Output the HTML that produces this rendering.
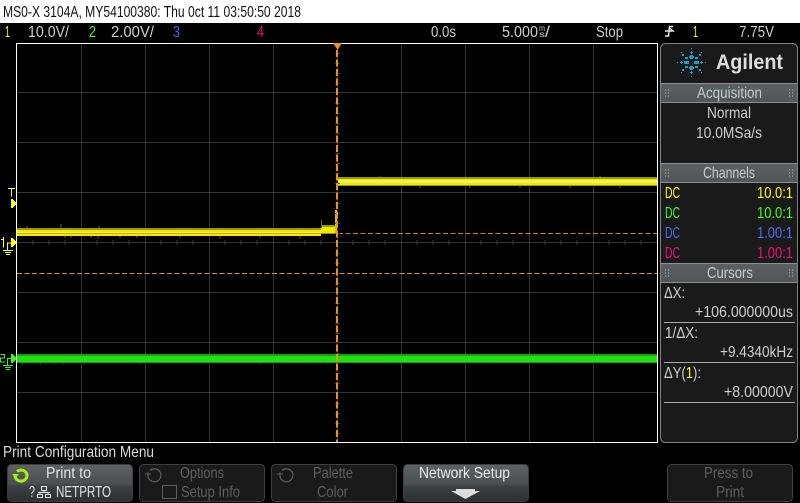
<!DOCTYPE html>
<html><head><meta charset="utf-8"><style>
html,body{margin:0;padding:0;background:#000;width:800px;height:503px;overflow:hidden}
svg{display:block}
text{font-family:"Liberation Sans",sans-serif;font-size:16px;fill:#cfcfcf}
.c{shape-rendering:crispEdges}
.h{fill:#c8cccc}
.d{fill:#5f5f5f;font-size:16px}
.w{fill:#e2e2e2}
</style></head><body>
<svg width="800" height="503" viewBox="0 0 800 503" xmlns="http://www.w3.org/2000/svg">
<defs>
<linearGradient id="hg" x1="0" y1="0" x2="0" y2="1"><stop offset="0" stop-color="#5c6163"/><stop offset="1" stop-color="#505456"/></linearGradient>
<linearGradient id="bg" x1="0" y1="0" x2="0" y2="1"><stop offset="0" stop-color="#5e6264"/><stop offset=".5" stop-color="#4c5052"/><stop offset=".6" stop-color="#3c4042"/><stop offset="1" stop-color="#2c3032"/></linearGradient>
</defs>
<rect width="800" height="503" fill="#000"/>
<rect width="800" height="23" fill="#fff"/>
<text x="3" y="17" textLength="298" lengthAdjust="spacingAndGlyphs" style="fill:#111">MS0-X 3104A, MY54100380: Thu 0ct 11 03:50:50 2018</text>

<!-- status row -->
<text x="5" y="37" textLength="5" lengthAdjust="spacingAndGlyphs" style="fill:#ffff20">1</text>
<text x="28" y="37" textLength="41" lengthAdjust="spacingAndGlyphs">10.0V/</text>
<text x="89" y="37" textLength="7" lengthAdjust="spacingAndGlyphs" style="fill:#40ff20">2</text>
<text x="111" y="37" textLength="43" lengthAdjust="spacingAndGlyphs">2.00V/</text>
<text x="173" y="37" textLength="7" lengthAdjust="spacingAndGlyphs" style="fill:#4868e8">3</text>
<text x="257" y="37" textLength="7" lengthAdjust="spacingAndGlyphs" style="fill:#e8106c">4</text>
<text x="431" y="37" textLength="25" lengthAdjust="spacingAndGlyphs">0.0s</text>
<text x="502" y="37" textLength="36" lengthAdjust="spacingAndGlyphs">5.000</text>
<text x="539" y="31" textLength="6" lengthAdjust="spacingAndGlyphs" style="font-size:8px">m</text>
<text x="539" y="37" textLength="6" lengthAdjust="spacingAndGlyphs" style="font-size:8px">s</text>
<text x="545" y="37" textLength="5" lengthAdjust="spacingAndGlyphs">/</text>
<text x="596" y="37" textLength="27" lengthAdjust="spacingAndGlyphs">Stop</text>
<path d="M665 36h3.500l1-9.500h3.500M665 31h8l-4-3.500" stroke="#e8e8e8" stroke-width="1.400" fill="none"/>
<text x="693" y="37" textLength="5" lengthAdjust="spacingAndGlyphs" style="fill:#ffff20">1</text>
<text x="739" y="37" textLength="35" lengthAdjust="spacingAndGlyphs">7.75V</text>

<!-- graticule -->
<g class="c" fill="#343434">
<rect x="81" y="44" width="1" height="398"/><rect x="145" y="44" width="1" height="398"/><rect x="209" y="44" width="1" height="398"/><rect x="273" y="44" width="1" height="398"/><rect x="337" y="44" width="1" height="398"/><rect x="401" y="44" width="1" height="398"/><rect x="465" y="44" width="1" height="398"/><rect x="529" y="44" width="1" height="398"/><rect x="593" y="44" width="1" height="398"/>
<rect x="17" y="92" width="641" height="1"/><rect x="17" y="142" width="641" height="1"/><rect x="17" y="192" width="641" height="1"/><rect x="17" y="242" width="641" height="1"/><rect x="17" y="292" width="641" height="1"/><rect x="17" y="342" width="641" height="1"/><rect x="17" y="392" width="641" height="1"/>
</g>
<path class="c" d="M33 240v5M49 240v5M65 240v5M97 240v5M113 240v5M129 240v5M161 240v5M177 240v5M193 240v5M225 240v5M241 240v5M257 240v5M289 240v5M305 240v5M321 240v5M353 240v5M369 240v5M385 240v5M417 240v5M433 240v5M449 240v5M481 240v5M497 240v5M513 240v5M545 240v5M561 240v5M577 240v5M609 240v5M625 240v5M641 240v5" stroke="#3c3c3c" fill="none"/>
<rect class="c" x="16" y="43" width="1" height="400" fill="#fff"/>
<rect class="c" x="16" y="43" width="642" height="1" fill="#fff"/>
<rect class="c" x="16" y="442" width="642" height="1" fill="#fff"/>
<rect class="c" x="657" y="43" width="1" height="400" fill="#fff"/>

<!-- orange cursor lines -->
<path class="c" d="M17 273.500H657" stroke="#e8902a" stroke-width="1" stroke-dasharray="5 2.500"/>
<path class="c" d="M338 233.500H657" stroke="#e8902a" stroke-width="1" stroke-dasharray="5 2.500" opacity=".9"/>

<!-- yellow trace -->
<g class="c">
<rect x="17" y="228" width="304" height="8" fill="#9a9a00"/>
<rect x="17" y="230" width="304" height="6" fill="#ecec00"/>
<rect x="17" y="232" width="304" height="2" fill="#f4ec60"/>
<rect x="17" y="233" width="304" height="1" fill="#e0a020"/>
<rect x="321" y="225" width="15" height="9" fill="#9a9a00"/>
<rect x="321" y="227" width="15" height="6" fill="#ecec00"/>
<rect x="321" y="220" width="1" height="8" fill="#6a6a00"/>
<rect x="335" y="210" width="2" height="24" fill="#c8c800"/>
<rect x="338" y="177" width="319" height="9" fill="#9a9a00"/>
<rect x="338" y="179" width="319" height="6" fill="#ecec00"/>
<rect x="338" y="180" width="319" height="3" fill="#f4f050"/>
<path d="M27 226v2M61 224v4M99 226v2M65 236v2M71 236v2M91 236v2M98 236v3M137 236v2M120 236v2M180 236v2M220 236v3M260 236v2M300 236v3M380 176v1M420 186v2M470 186v2M520 186v2M570 186v2M620 186v2M600 176v1" stroke="#6a6a00" fill="none"/>
<!-- green trace -->
<rect x="17" y="354" width="640" height="9" fill="#1aa012"/>
<rect x="17" y="356" width="640" height="6" fill="#20e010"/>
<path d="M22 363v3M41 363v2M46 363v2M54 363v2M63 363v2M84 363v2M140 363v2M200 363v2M260 363v2M320 363v2M400 363v2M480 363v2M560 363v2" stroke="#0c5a08" fill="none"/>
</g>

<!-- vertical trigger line -->
<path class="c" d="M335 53.500h5M335 63.500h5M335 73.500h5M335 83.500h5M335 103.500h5M335 113.500h5M335 123.500h5M335 133.500h5M335 153.500h5M335 163.500h5M335 173.500h5M335 183.500h5M335 203.500h5M335 213.500h5M335 223.500h5M335 233.500h5M335 253.500h5M335 263.500h5M335 273.500h5M335 283.500h5M335 303.500h5M335 313.500h5M335 323.500h5M335 333.500h5M335 353.500h5M335 373.500h5M335 383.500h5M335 403.500h5M335 413.500h5M335 423.500h5M335 433.500h5" stroke="#3c3c3c" fill="none"/>
<path class="c" d="M337 50V442" stroke="#f09018" stroke-width="2" stroke-dasharray="7 2.500" fill="none"/>
<path d="M333 43h9l-4.500 7z" fill="#f09018"/>

<!-- markers -->
<g fill="none" stroke="#ffff20" stroke-width="1" class="c">
<path d="M8 188.500h7M11.500 188v8.500"/>
<path d="M1 239.500h2.500M3.500 237v10.500M7.500 250.500V243h3.500M3 250.500h10M5 252.500h6M6 254.500h4"/>
</g>
<g class="c" fill="#ffff20">
<rect x="11" y="199" width="2" height="9"/><rect x="13" y="200" width="1" height="7"/><rect x="14" y="201" width="1" height="5"/><rect x="15" y="202" width="1" height="3"/>
<rect x="11" y="238" width="2" height="9"/><rect x="13" y="239" width="1" height="7"/><rect x="14" y="240" width="1" height="5"/><rect x="15" y="241" width="1" height="3"/>
</g>
<g fill="none" stroke="#40f020" stroke-width="1" class="c">
<path d="M0.500 354.500h4v3.500h-4v4h4.500M7.500 365v-6.500h3.500M3 365.500h10M5 367.500h6M6 369.500h4"/>
</g>
<g class="c" fill="#40f020">
<rect x="11" y="354" width="2" height="9"/><rect x="13" y="355" width="1" height="7"/><rect x="14" y="356" width="1" height="5"/><rect x="15" y="357" width="1" height="3"/>
</g>

<!-- right panel -->
<rect x="660.500" y="43.500" width="137" height="399" rx="5" fill="#1a1a1a" stroke="#7e8284"/>
<g fill="#1f9cc4" class="c">
<rect x="691" y="48" width="1" height="1"/><rect x="691" y="76" width="1" height="1"/>
<rect x="677" y="62" width="1" height="1"/><rect x="705" y="62" width="1" height="1"/>
<rect x="681" y="52" width="1" height="1"/><rect x="701" y="52" width="1" height="1"/><rect x="681" y="72" width="1" height="1"/><rect x="701" y="72" width="1" height="1"/>
<path d="M690 52h1v-1h1v1h1v1h-1v1h-1v-1h-1zM690 72h1v-1h1v1h1v1h-1v1h-1v-1h-1zM680 62h1v-1h1v1h1v1h-1v1h-1v-1h-1zM700 62h1v-1h1v1h1v1h-1v1h-1v-1h-1z"/>
<rect x="689" y="56" width="5" height="2"/><rect x="690" y="55" width="3" height="4"/>
<rect x="689" y="67" width="5" height="2"/><rect x="690" y="66" width="3" height="4"/>
<rect x="684" y="61" width="5" height="3"/>
<rect x="694" y="61" width="5" height="3"/>
<rect x="685" y="57" width="3" height="2"/><rect x="695" y="57" width="3" height="2"/><rect x="685" y="66" width="3" height="2"/><rect x="695" y="66" width="3" height="2"/>
<rect x="682" y="54" width="2" height="2"/><rect x="699" y="54" width="2" height="2"/><rect x="682" y="69" width="2" height="2"/><rect x="699" y="69" width="2" height="2"/>
</g>
<text x="716" y="69" textLength="67" lengthAdjust="spacingAndGlyphs" style="font-weight:bold;font-size:21px;fill:#dedede">Agilent</text>

<g class="c">
<rect x="661" y="83" width="136" height="20" fill="url(#hg)"/><rect x="661" y="83" width="136" height="1" fill="#8c9092"/><rect x="661" y="102" width="136" height="1" fill="#8c9092"/>
<rect x="661" y="163" width="136" height="20" fill="url(#hg)"/><rect x="661" y="163" width="136" height="1" fill="#8c9092"/><rect x="661" y="182" width="136" height="1" fill="#8c9092"/>
<rect x="661" y="263" width="136" height="20" fill="url(#hg)"/><rect x="661" y="263" width="136" height="1" fill="#8c9092"/><rect x="661" y="282" width="136" height="1" fill="#8c9092"/>
</g>
<path class="c" d="M665 90h1M668 90h1M665 93h1M668 93h1M665 96h1M668 96h1M789 90h1M792 90h1M789 93h1M792 93h1M789 96h1M792 96h1M665 170h1M668 170h1M665 173h1M668 173h1M665 176h1M668 176h1M789 170h1M792 170h1M789 173h1M792 173h1M789 176h1M792 176h1M665 270h1M668 270h1M665 273h1M668 273h1M665 276h1M668 276h1M789 270h1M792 270h1M789 273h1M792 273h1M789 276h1M792 276h1" stroke="#b8bcbc" fill="none"/>

<text class="h" x="697" y="98" textLength="65" lengthAdjust="spacingAndGlyphs">Acquisition</text>
<text x="707" y="118" textLength="44" lengthAdjust="spacingAndGlyphs">Normal</text>
<text x="696" y="138" textLength="66" lengthAdjust="spacingAndGlyphs">10.0MSa/s</text>
<text class="h" x="703" y="178" textLength="52" lengthAdjust="spacingAndGlyphs">Channels</text>
<text x="665" y="198" textLength="15" lengthAdjust="spacingAndGlyphs" style="fill:#ffff20">DC</text>
<text x="757" y="198" textLength="36" lengthAdjust="spacingAndGlyphs" style="fill:#ffff20">10.0:1</text>
<text x="665" y="218" textLength="15" lengthAdjust="spacingAndGlyphs" style="fill:#40ff20">DC</text>
<text x="757" y="218" textLength="36" lengthAdjust="spacingAndGlyphs" style="fill:#40ff20">10.0:1</text>
<text x="665" y="238" textLength="15" lengthAdjust="spacingAndGlyphs" style="fill:#4c70f0">DC</text>
<text x="757" y="238" textLength="36" lengthAdjust="spacingAndGlyphs" style="fill:#4c70f0">1.00:1</text>
<text x="665" y="258" textLength="15" lengthAdjust="spacingAndGlyphs" style="fill:#f0107a">DC</text>
<text x="757" y="258" textLength="36" lengthAdjust="spacingAndGlyphs" style="fill:#f0107a">1.00:1</text>
<text class="h" x="707" y="278" textLength="46" lengthAdjust="spacingAndGlyphs">Cursors</text>
<text x="664" y="298" textLength="21" lengthAdjust="spacingAndGlyphs">ΔX:</text>
<text x="695" y="317" textLength="98" lengthAdjust="spacingAndGlyphs">+106.000000us</text>
<rect class="c" x="664" y="322" width="131" height="1" fill="#a8a8a8"/>
<text x="665" y="338" textLength="33" lengthAdjust="spacingAndGlyphs">1/ΔX:</text>
<text x="720" y="357" textLength="73" lengthAdjust="spacingAndGlyphs">+9.4340kHz</text>
<rect class="c" x="664" y="362" width="131" height="1" fill="#a8a8a8"/>
<text x="664" y="378" textLength="37" lengthAdjust="spacingAndGlyphs">ΔY(<tspan style="fill:#ffff20">1</tspan>):</text>
<text x="724" y="397" textLength="69" lengthAdjust="spacingAndGlyphs">+8.00000V</text>
<rect class="c" x="664" y="402" width="131" height="1" fill="#a8a8a8"/>

<!-- bottom -->
<text x="3" y="457" textLength="151" lengthAdjust="spacingAndGlyphs" style="fill:#dcdcdc">Print Configuration Menu</text>

<rect x="7.500" y="464.500" width="125" height="37" rx="4" fill="url(#bg)" stroke="#3a3e40"/>
<rect x="139.500" y="464.500" width="125" height="37" rx="4" fill="#1a1a1a" stroke="#404040"/>
<rect x="271.500" y="464.500" width="125" height="37" rx="4" fill="#1a1a1a" stroke="#404040"/>
<rect x="403.500" y="464.500" width="125" height="37" rx="4" fill="url(#bg)" stroke="#3a3e40"/>
<rect x="667.500" y="464.500" width="125" height="37" rx="4" fill="#1a1a1a" stroke="#404040"/>

<!-- button 1 -->
<path d="M17 471.500a6 5.500 0 1 1-2 4.500" fill="none" stroke="#a6f010" stroke-width="3"/>
<path d="M12 474h7l-3.500 4z" fill="#a6f010"/>
<text class="w" x="46" y="478" textLength="45" lengthAdjust="spacingAndGlyphs">Print to</text>
<text class="w" x="29" y="497" textLength="6" lengthAdjust="spacingAndGlyphs">?</text>
<path class="c" d="M41.500 486.500h5v4h-5zM44 490.500v2M38 492.500h12M40 492.500v2M48 492.500v2M37.500 494.500h5v3h-5zM45.500 494.500h5v3h-5z" fill="none" stroke="#e6e6e6"/>
<text class="w" x="56" y="497" textLength="55" lengthAdjust="spacingAndGlyphs">NETPRTO</text>

<!-- button 2 -->
<path d="M150 470.500a6.500 6.500 0 1 1-2 6" fill="none" stroke="#5f5f5f" stroke-width="1.200"/>
<path d="M145 474h6M148 472v5" stroke="#5f5f5f" fill="none"/>
<text class="d" x="180" y="478" textLength="44" lengthAdjust="spacingAndGlyphs">Options</text>
<rect class="c" x="162.500" y="485.500" width="14" height="13" fill="none" stroke="#5f5f5f"/>
<text class="d" x="181" y="497" textLength="59" lengthAdjust="spacingAndGlyphs">Setup Info</text>

<!-- button 3 -->
<path d="M282 470.500a6.500 6.500 0 1 1-2 6" fill="none" stroke="#5f5f5f" stroke-width="1.200"/>
<path d="M277 474h6M280 472v5" stroke="#5f5f5f" fill="none"/>
<text class="d" x="313" y="478" textLength="40" lengthAdjust="spacingAndGlyphs">Palette</text>
<text class="d" x="317" y="497" textLength="31" lengthAdjust="spacingAndGlyphs">Color</text>

<!-- button 4 -->
<text x="419" y="478" textLength="91" lengthAdjust="spacingAndGlyphs" style="fill:#ececec">Network Setup</text>
<path d="M456 489h19v2h5l-14.500 8-14.500-8h5z" fill="#dcdcdc"/>

<!-- button 6 -->
<text class="d" x="704" y="478" textLength="49" lengthAdjust="spacingAndGlyphs">Press to</text>
<text class="d" x="716" y="497" textLength="28" lengthAdjust="spacingAndGlyphs">Print</text>
</svg>
</body></html>
